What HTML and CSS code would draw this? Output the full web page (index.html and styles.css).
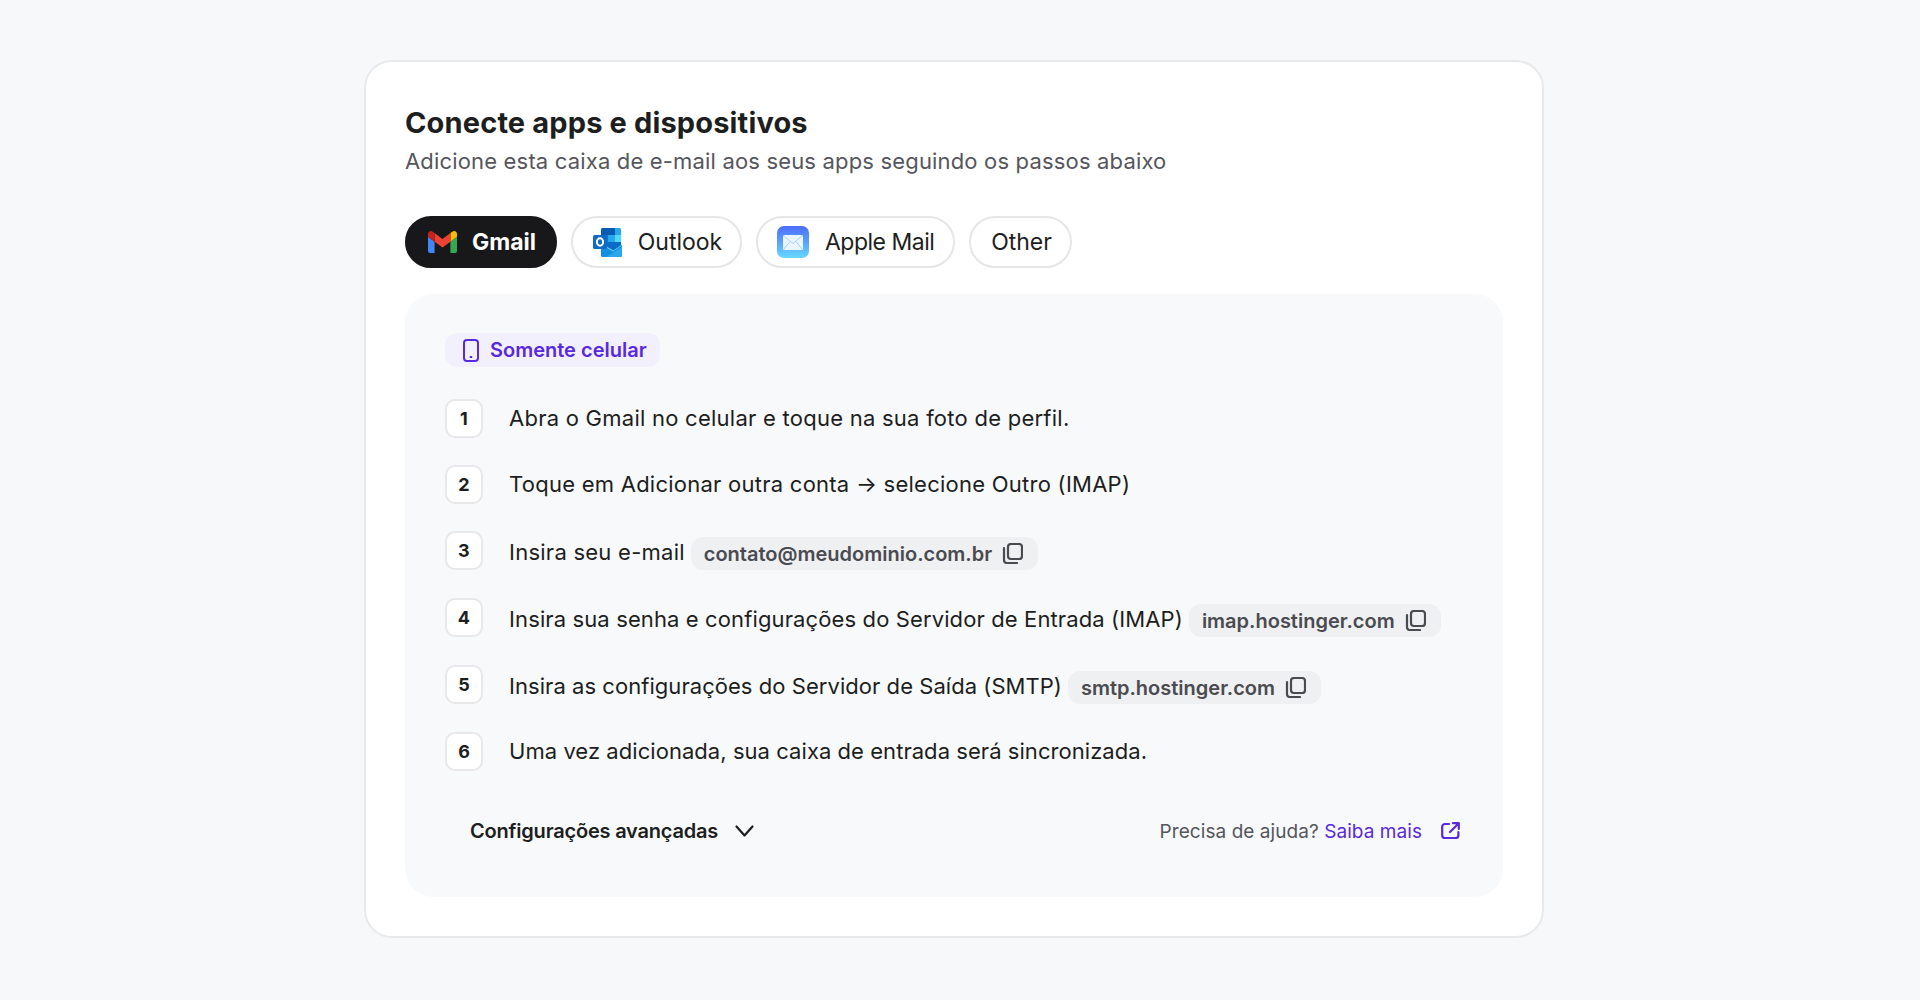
FILE: index.html
```html
<!DOCTYPE html>
<html lang="pt-BR">
<head>
    <meta charset="UTF-8">
    <title>Conecte apps e dispositivos</title>
    <link rel="stylesheet" href="styles.css">
</head>
<body>
    <div class="card">
        <h1>Conecte apps e dispositivos</h1>
        <p class="subtitle">Adicione esta caixa de e-mail aos seus apps seguindo os passos abaixo</p>

        <div class="tabs">
            <div class="tab tab-active">
                <svg class="icon-gmail" viewBox="52 42 88 66">
                    <path fill="#4285f4" d="M58 108h14V74L52 59v43c0 3.32 2.69 6 6 6"/>
                    <path fill="#34a853" d="M120 108h14c3.32 0 6-2.69 6-6V59l-20 15"/>
                    <path fill="#fbbc04" d="M120 48v26l20-15v-8c0-7.42-8.47-11.65-14.4-7.2"/>
                    <path fill="#ea4335" d="M72 74V48l24 18 24-18v26L96 92"/>
                    <path fill="#c5221f" d="M52 51v8l20 15V48l-5.6-4.2c-5.94-4.45-14.4-.22-14.4 7.2"/>
                </svg>
                Gmail
            </div>
            <div class="tab">
                <svg class="icon-outlook" viewBox="0 0 29 29">
                    <path fill="#0a5cb0" d="M8 1.5C8 .7 8.7 0 9.500 0H22v7H8z"/>
                    <rect fill="#0a78d4" x="8" y="7" width="7" height="7"/>
                    <rect fill="#28a8ea" x="15" y="7" width="7" height="7"/>
                    <path fill="#28a8ea" d="M22 0h4.500c.8 0 1.500.7 1.500 1.500V7h-6z"/>
                    <rect fill="#50d9ff" x="22" y="7" width="6" height="7"/>
                    <path fill="#0f78d4" d="M8 14h6v14H8z"/>
                    <path fill="#0a6cc8" d="M14 14h14v4l-7 5-7-4z"/>
                    <path fill="#1490df" d="M8 16l12 7 9-6v10.500c0 .8-.7 1.500-1.500 1.500h-18C8.700 29 8 28.300 8 27.500z"/>
                    <path d="M8 16l12 7 9-6" fill="none" stroke="#50c8f5" stroke-width=".9"/>
                    <path fill="#28a8ea" d="M13 29l16-10v8.500c0 .8-.7 1.500-1.500 1.500z"/>
                    <rect fill="#0f6cc4" x="0" y="7" width="14" height="14" rx="1.500"/>
                    <ellipse cx="7" cy="14" rx="3.100" ry="3.800" fill="none" stroke="#fff" stroke-width="2"/>
                </svg>
                Outlook
            </div>
            <div class="tab tab-apple">
                <div class="icon-apple">
                    <svg viewBox="0 0 20 15" width="20" height="15">
                        <rect x="0" y="0" width="20" height="15" rx="1.500" fill="#eaf5ff"/>
                        <path d="M1 1l9 7.500 9-7.500M1 14l6-7.500M19 14l-6-7.500" fill="none" stroke="#a9d3fc" stroke-width="1"/>
                    </svg>
                </div>
                Apple Mail
            </div>
            <div class="tab">Other</div>
        </div>

        <div class="panel">
            <div class="badge">
                <svg width="16" height="23" viewBox="0 0 16 23" fill="none" stroke="#5829e0" stroke-width="2">
                    <rect x="1" y="1" width="14" height="21" rx="3"/>
                    <path d="M6.800 18h2.400"/>
                </svg>
                Somente celular
            </div>

            <div class="steps">
                <div class="step step-wide">
                    <div class="step-num">1</div>
                    <div class="step-body">Abra o Gmail no celular e toque na sua foto de perfil.</div>
                </div>
                <div class="step step-wide">
                    <div class="step-num">2</div>
                    <div class="step-body">Toque em Adicionar outra conta → selecione Outro (IMAP)</div>
                </div>
                <div class="step step-chip step-wide">
                    <div class="step-num">3</div>
                    <div class="step-body">
                        Insira seu e-mail
                        <span class="chip">contato@meudominio.com.br
                            <svg class="icon-copy" viewBox="0 0 21 21"><rect x="6" y="1" width="14" height="15" rx="3"/><path d="M2 5v12c0 1.700 1.300 3 3 3h10"/></svg>
                        </span>
                    </div>
                </div>
                <div class="step step-chip">
                    <div class="step-num">4</div>
                    <div class="step-body">
                        Insira sua senha e configurações do Servidor de Entrada (IMAP)
                        <span class="chip">imap.hostinger.com
                            <svg class="icon-copy" viewBox="0 0 21 21"><rect x="6" y="1" width="14" height="15" rx="3"/><path d="M2 5v12c0 1.700 1.300 3 3 3h10"/></svg>
                        </span>
                    </div>
                </div>
                <div class="step step-chip step-tight">
                    <div class="step-num">5</div>
                    <div class="step-body">
                        Insira as configurações do Servidor de Saída (SMTP)
                        <span class="chip">smtp.hostinger.com
                            <svg class="icon-copy" viewBox="0 0 21 21"><rect x="6" y="1" width="14" height="15" rx="3"/><path d="M2 5v12c0 1.700 1.300 3 3 3h10"/></svg>
                        </span>
                    </div>
                </div>
                <div class="step step-tight">
                    <div class="step-num">6</div>
                    <div class="step-body">Uma vez adicionada, sua caixa de entrada será sincronizada.</div>
                </div>
            </div>

            <div class="panel-footer">
                <div class="advanced">
                    Configurações avançadas
                    <svg width="19" height="12" viewBox="0 0 19 12" fill="none" stroke="#1d1e20" stroke-width="2.200" stroke-linecap="round" stroke-linejoin="round">
                        <path d="M1.500 1.500l8 9 8-9"/>
                    </svg>
                </div>
                <div class="help">
                    Precisa de ajuda?&nbsp;<a href="#">Saiba mais</a>
                    <svg class="icon-external" width="19" height="18" viewBox="0 0 19 18" fill="none" stroke="#5829e0" stroke-width="2.200" stroke-linecap="round" stroke-linejoin="round">
                        <path d="M8 2H4C2.300 2 1.200 3.100 1.200 4.800v8.400c0 1.700 1.100 2.800 2.800 2.800h10.600c1.700 0 2.800-1.100 2.800-2.800V10"/>
                        <path d="M12 1.200h5.800V7M17.500 1.500L9 10"/>
                    </svg>
                </div>
            </div>
        </div>
    </div>
</body>
</html>
```

FILE: styles.css
```css
body {
    font-family: Inter, "Noto Sans", sans-serif;
    margin: 0;
    padding: 60px 0 0 364px;
    background-color: #f7f8fa;
    color: #1d1e20;
}
.card {
    box-sizing: border-box;
    width: 1180px;
    padding: 43px 39px 39px;
    background-color: #fff;
    border: 2px solid #e8e9eb;
    border-radius: 28px;
}
h1 {
    margin: 0;
    font-size: 29px;
    line-height: 36px;
    font-weight: 700;
    letter-spacing: 0.15px;
}
.subtitle {
    margin: 5px 0 0;
    font-size: 22px;
    line-height: 30px;
    letter-spacing: 0.17px;
    color: #55565c;
}
.tabs {
    display: flex;
    gap: 14px;
    margin-top: 40px;
}
.tab {
    display: flex;
    align-items: center;
    gap: 16px;
    box-sizing: border-box;
    height: 52px;
    padding: 0 18px 0 20px;
    font-size: 23px;
    letter-spacing: -0.05px;
    border: 2px solid #e6e6e8;
    border-radius: 26px;
    background-color: #fff;
}
.tab-active {
    gap: 15px;
    padding: 0 19px 0 21px;
    background-color: #18181a;
    border-color: #18181a;
    color: #fff;
    font-weight: 700;
}
.tab-apple {
    padding: 0 19px 0 19px;
    letter-spacing: -0.5px;
}
.icon-gmail {
    width: 29px;
    height: 22px;
}
.icon-outlook {
    width: 29px;
    height: 29px;
}
.icon-apple {
    display: flex;
    align-items: center;
    justify-content: center;
    width: 32px;
    height: 32px;
    border-radius: 7px;
    background: linear-gradient(#4d6cfa, #66d8ff);
}
.panel {
    margin-top: 26px;
    padding: 39px 43px 54px 40px;
    background-color: #f8f9fb;
    border-radius: 28px;
}
.badge {
    display: inline-flex;
    align-items: center;
    gap: 11px;
    height: 34px;
    padding: 0 13px 0 18px;
    font-size: 20px;
    font-weight: 600;
    color: #5829e0;
    background-color: #f3f0fe;
    border-radius: 12px;
}
.steps {
    display: flex;
    flex-direction: column;
    gap: 27px;
    margin-top: 32px;
}
.step {
    display: flex;
    gap: 26px;
    height: 39px;
    letter-spacing: 0.12px;
}
.step-wide {
    letter-spacing: 0.25px;
}
.step-tight {
    letter-spacing: 0.05px;
}
.step-chip {
    height: 40px;
}
.step-num {
    display: flex;
    align-items: center;
    justify-content: center;
    box-sizing: border-box;
    width: 38px;
    height: 39px;
    font-size: 18px;
    font-weight: 700;
    background-color: #fff;
    border: 2px solid #e8e8ea;
    border-radius: 10px;
}
.step-body {
    display: flex;
    align-items: center;
    gap: 6px;
    height: 37px;
    font-size: 22px;
    white-space: nowrap;
}
.step-chip .step-body {
    margin-top: 1px;
    height: 39px;
}
.chip {
    display: inline-flex;
    align-items: center;
    gap: 10px;
    height: 33px;
    margin-top: 4px;
    padding: 0 15px 0 13px;
    font-size: 20px;
    font-weight: 600;
    letter-spacing: 0;
    color: #4a4b50;
    background-color: #eff0f2;
    border-radius: 12px;
}
.icon-copy {
    width: 21px;
    height: 21px;
    fill: none;
    stroke: #4a4b50;
    stroke-width: 2.2;
    stroke-linecap: round;
}
.panel-footer {
    display: flex;
    justify-content: space-between;
    align-items: center;
    margin-top: 48px;
    height: 24px;
    padding-left: 25px;
}
.advanced {
    display: flex;
    align-items: center;
    gap: 17px;
    font-size: 20px;
    font-weight: 600;
    letter-spacing: -0.2px;
}
.help {
    display: flex;
    align-items: center;
    font-size: 19px;
    letter-spacing: 0.06px;
    color: #55565c;
}
.help a {
    color: #5829e0;
    text-decoration: none;
}
.icon-external {
    margin-left: 19px;
}
```
